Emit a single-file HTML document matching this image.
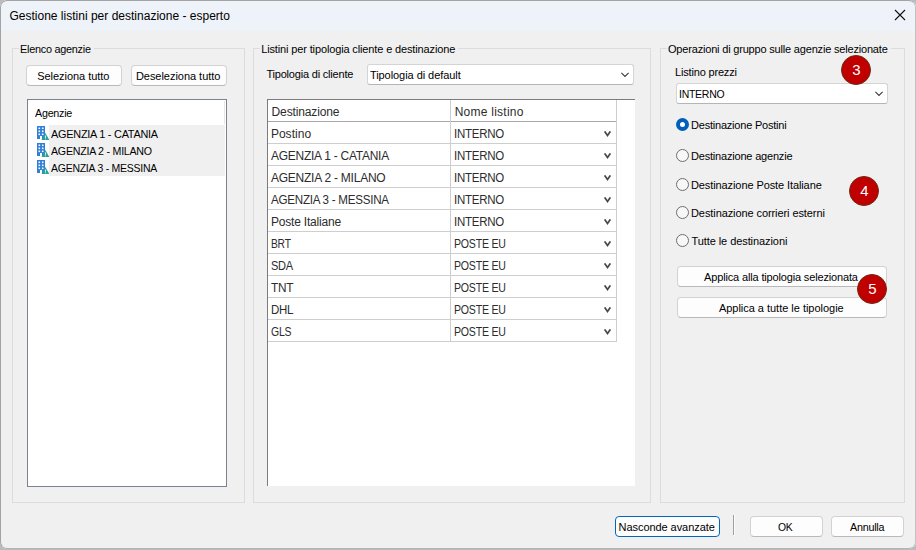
<!DOCTYPE html>
<html><head><meta charset="utf-8"><title>Gestione listini per destinazione - esperto</title>
<style>
*{box-sizing:border-box;margin:0;padding:0}
html,body{width:916px;height:550px;overflow:hidden;background:#b9bcbb;font-family:"Liberation Sans",sans-serif;font-size:11px;color:#000}
#win{position:absolute;left:0;top:0;width:916px;height:549px;background:#f0f0f0;border-radius:7px;overflow:hidden}
#winb{position:absolute;left:0;top:0;width:916px;height:549px;border-radius:7px;border:1px solid #a3a3a3;border-right-color:#c2c2c2;border-bottom-color:#b4b4b4;pointer-events:none}
#tb{position:absolute;left:0;top:0;width:916px;height:31px;background:#eef2f9}
.abs{position:absolute}
.x{position:absolute;white-space:nowrap}
.gb{position:absolute;border:1px solid #dcdcdc}
.gm{position:absolute;background:#f0f0f0;height:3px}
.btn{position:absolute;background:#fdfdfd;border:1px solid #d2d2d2;border-bottom-color:#b9b9b9;border-radius:4px}
.lb{position:absolute;background:#fff;border:1px solid #7a828d}
.row{position:absolute;left:49px;width:176px;height:17px;background:#f0f0f0}
.combo{position:absolute;background:#fff;border:1px solid #d4d4d4;border-bottom-color:#b5b5b5;border-radius:3px}
.radio{position:absolute;width:13px;height:13px;border-radius:50%;border:1px solid #6e6e6e;background:#f7f7f7}
.radio.on{border:4px solid #005fb8;background:#fff}
.badge{position:absolute;width:30px;height:30px;border-radius:50%;background:#c00000;border:1px solid #6e2a12;color:#fff;font-size:15px;line-height:28px;text-align:center;padding-left:1px}
.hl{position:absolute;height:1px;background:#cecece}
.vl{position:absolute;width:1px;background:#cecece}
</style></head><body>
<div id="win">
 <div id="tb"></div>
 <svg class="abs" style="left:894px;top:9px" width="12" height="12" viewBox="0 0 12 12"><path d="M1 1 L11 11 M11 1 L1 11" stroke="#111" stroke-width="1.1" fill="none"/></svg>

 <!-- group 1 -->
 <div class="gb" style="left:12px;top:48px;width:233px;height:455px"></div>
 <div class="gm" style="left:19px;top:47px;width:75px"></div>
 <div class="btn" style="left:26px;top:65px;width:96px;height:21px"></div>
 <div class="btn" style="left:131px;top:65px;width:96px;height:21px"></div>
 <div class="lb" style="left:27px;top:99px;width:200px;height:388px"></div>
 <div class="row" style="top:125px"></div>
 <div class="row" style="top:142px"></div>
 <div class="row" style="top:159px"></div>
 <div class="abs" style="left:224px;top:101px;width:1px;height:23px;background:#e6e6e6"></div>
 <svg class="abs" style="left:37px;top:126px" width="13" height="14" viewBox="0 0 13 14"><path d="M0 0h8v13h-3v-3h-2v3h-3z" fill="#2f7fd6"/><g fill="#fff"><rect x="1.5" y="1.5" width="1.6" height="1.6"/><rect x="4.9" y="1.5" width="1.6" height="1.6"/><rect x="1.5" y="4.5" width="1.6" height="1.6"/><rect x="4.9" y="4.5" width="1.6" height="1.6"/><rect x="1.5" y="7.5" width="1.6" height="1.6"/><rect x="4.9" y="7.5" width="1.6" height="1.6"/></g><path d="M8.4 7 L12.3 14 H4.6z" fill="#2aa198"/><rect x="8" y="9.5" width="0.9" height="2.3" fill="#e8fff8"/><rect x="8" y="12.4" width="0.9" height="0.9" fill="#e8fff8"/></svg>
<svg class="abs" style="left:37px;top:143px" width="13" height="14" viewBox="0 0 13 14"><path d="M0 0h8v13h-3v-3h-2v3h-3z" fill="#2f7fd6"/><g fill="#fff"><rect x="1.5" y="1.5" width="1.6" height="1.6"/><rect x="4.9" y="1.5" width="1.6" height="1.6"/><rect x="1.5" y="4.5" width="1.6" height="1.6"/><rect x="4.9" y="4.5" width="1.6" height="1.6"/><rect x="1.5" y="7.5" width="1.6" height="1.6"/><rect x="4.9" y="7.5" width="1.6" height="1.6"/></g><path d="M8.4 7 L12.3 14 H4.6z" fill="#2aa198"/><rect x="8" y="9.5" width="0.9" height="2.3" fill="#e8fff8"/><rect x="8" y="12.4" width="0.9" height="0.9" fill="#e8fff8"/></svg>
<svg class="abs" style="left:37px;top:160px" width="13" height="14" viewBox="0 0 13 14"><path d="M0 0h8v13h-3v-3h-2v3h-3z" fill="#2f7fd6"/><g fill="#fff"><rect x="1.5" y="1.5" width="1.6" height="1.6"/><rect x="4.9" y="1.5" width="1.6" height="1.6"/><rect x="1.5" y="4.5" width="1.6" height="1.6"/><rect x="4.9" y="4.5" width="1.6" height="1.6"/><rect x="1.5" y="7.5" width="1.6" height="1.6"/><rect x="4.9" y="7.5" width="1.6" height="1.6"/></g><path d="M8.4 7 L12.3 14 H4.6z" fill="#2aa198"/><rect x="8" y="9.5" width="0.9" height="2.3" fill="#e8fff8"/><rect x="8" y="12.4" width="0.9" height="0.9" fill="#e8fff8"/></svg>

 <!-- group 2 -->
 <div class="gb" style="left:253px;top:48px;width:398px;height:455px"></div>
 <div class="gm" style="left:260px;top:47px;width:198px"></div>
 <div class="combo" style="left:367px;top:64px;width:267px;height:21px"></div>
 <svg class="abs" style="left:621px;top:72px" width="9" height="6" viewBox="0 0 9 6"><path d="M0.4 0.9 L4 4.5 L7.6 0.9" stroke="#383838" stroke-width="1.1" fill="none"/></svg>
 <!-- grid -->
 <div class="abs" style="left:267px;top:99px;width:368px;height:387px;background:#fff;border-left:1px solid #7c7c7c;border-top:1px solid #7c7c7c"></div>
 <div class="hl" style="left:268px;top:121px;width:349px;background:#a8a8a8"></div>
<div class="hl" style="left:268px;top:143px;width:349px"></div>
<div class="hl" style="left:268px;top:165px;width:349px"></div>
<div class="hl" style="left:268px;top:187px;width:349px"></div>
<div class="hl" style="left:268px;top:209px;width:349px"></div>
<div class="hl" style="left:268px;top:231px;width:349px"></div>
<div class="hl" style="left:268px;top:253px;width:349px"></div>
<div class="hl" style="left:268px;top:275px;width:349px"></div>
<div class="hl" style="left:268px;top:297px;width:349px"></div>
<div class="hl" style="left:268px;top:319px;width:349px"></div>
<div class="hl" style="left:268px;top:341px;width:349px"></div>
<div class="vl" style="left:450px;top:100px;height:242px"></div>
<div class="vl" style="left:616px;top:100px;height:242px"></div>
<svg class="abs" style="left:604px;top:131px" width="7" height="6" viewBox="0 0 7 6"><path d="M0.6 0.4 L3.5 4.5 L6.4 0.4" stroke="#484848" stroke-width="1.75" fill="none"/></svg>
<svg class="abs" style="left:604px;top:153px" width="7" height="6" viewBox="0 0 7 6"><path d="M0.6 0.4 L3.5 4.5 L6.4 0.4" stroke="#484848" stroke-width="1.75" fill="none"/></svg>
<svg class="abs" style="left:604px;top:175px" width="7" height="6" viewBox="0 0 7 6"><path d="M0.6 0.4 L3.5 4.5 L6.4 0.4" stroke="#484848" stroke-width="1.75" fill="none"/></svg>
<svg class="abs" style="left:604px;top:197px" width="7" height="6" viewBox="0 0 7 6"><path d="M0.6 0.4 L3.5 4.5 L6.4 0.4" stroke="#484848" stroke-width="1.75" fill="none"/></svg>
<svg class="abs" style="left:604px;top:219px" width="7" height="6" viewBox="0 0 7 6"><path d="M0.6 0.4 L3.5 4.5 L6.4 0.4" stroke="#484848" stroke-width="1.75" fill="none"/></svg>
<svg class="abs" style="left:604px;top:241px" width="7" height="6" viewBox="0 0 7 6"><path d="M0.6 0.4 L3.5 4.5 L6.4 0.4" stroke="#484848" stroke-width="1.75" fill="none"/></svg>
<svg class="abs" style="left:604px;top:263px" width="7" height="6" viewBox="0 0 7 6"><path d="M0.6 0.4 L3.5 4.5 L6.4 0.4" stroke="#484848" stroke-width="1.75" fill="none"/></svg>
<svg class="abs" style="left:604px;top:285px" width="7" height="6" viewBox="0 0 7 6"><path d="M0.6 0.4 L3.5 4.5 L6.4 0.4" stroke="#484848" stroke-width="1.75" fill="none"/></svg>
<svg class="abs" style="left:604px;top:307px" width="7" height="6" viewBox="0 0 7 6"><path d="M0.6 0.4 L3.5 4.5 L6.4 0.4" stroke="#484848" stroke-width="1.75" fill="none"/></svg>
<svg class="abs" style="left:604px;top:329px" width="7" height="6" viewBox="0 0 7 6"><path d="M0.6 0.4 L3.5 4.5 L6.4 0.4" stroke="#484848" stroke-width="1.75" fill="none"/></svg>

 <!-- group 3 -->
 <div class="gb" style="left:660px;top:48px;width:245px;height:455px"></div>
 <div class="gm" style="left:667px;top:47px;width:224px"></div>
 <div class="combo" style="left:676px;top:83px;width:212px;height:21px"></div>
 <svg class="abs" style="left:875px;top:91px" width="9" height="6" viewBox="0 0 9 6"><path d="M0.4 0.9 L4 4.5 L7.6 0.9" stroke="#383838" stroke-width="1.1" fill="none"/></svg>
 <div class="radio on" style="left:676px;top:118px"></div>
 <div class="radio" style="left:676px;top:149px"></div>
 <div class="radio" style="left:676px;top:178px"></div>
 <div class="radio" style="left:676px;top:206px"></div>
 <div class="radio" style="left:676px;top:234px"></div>
 <div class="btn" style="left:677px;top:266px;width:210px;height:21px"></div>
 <div class="btn" style="left:677px;top:297px;width:210px;height:21px"></div>

 <!-- bottom buttons -->
 <div class="btn" style="left:615px;top:516px;width:105px;height:21px;border-color:#0067c0"></div>
 <div class="abs" style="left:733px;top:515px;width:1px;height:20px;background:#a0a0a0"></div><div class="abs" style="left:734px;top:515px;width:1px;height:21px;background:#fbfbfb"></div>
 <div class="btn" style="left:750px;top:516px;width:73px;height:21px"></div>
 <div class="btn" style="left:831px;top:516px;width:73px;height:21px"></div>

<span class="x t" id="title" style="left:9.40px;top:9.24px;letter-spacing:0.009px;font-size:12px;line-height:14px;color:#000">Gestione listini per destinazione - esperto</span>
<span class="x l" id="g1" style="left:19.80px;top:43.29px;letter-spacing:-0.250px;transform:scaleX(0.9855);transform-origin:0 0;font-size:11px;line-height:13px;color:#000">Elenco agenzie</span>
<span class="x l" id="b1" style="left:37.20px;top:69.89px;letter-spacing:-0.042px;font-size:11px;line-height:13px;color:#000">Seleziona tutto</span>
<span class="x l" id="b2" style="left:135.90px;top:69.89px;letter-spacing:-0.031px;font-size:11px;line-height:13px;color:#000">Deseleziona tutto</span>
<span class="x l" id="ag" style="left:34.90px;top:107.29px;letter-spacing:-0.250px;transform:scaleX(0.9746);transform-origin:0 0;font-size:11px;line-height:13px;color:#000">Agenzie</span>
<span class="x l" id="a1" style="left:51.30px;top:128.39px;letter-spacing:-0.250px;transform:scaleX(0.9903);transform-origin:0 0;font-size:11px;line-height:13px;color:#000">AGENZIA 1 - CATANIA</span>
<span class="x l" id="a2" style="left:51.30px;top:145.29px;letter-spacing:-0.250px;transform:scaleX(0.9667);transform-origin:0 0;font-size:11px;line-height:13px;color:#000">AGENZIA 2 - MILANO</span>
<span class="x l" id="a3" style="left:51.30px;top:162.29px;letter-spacing:-0.250px;transform:scaleX(0.9516);transform-origin:0 0;font-size:11px;line-height:13px;color:#000">AGENZIA 3 - MESSINA</span>
<span class="x l" id="g2" style="left:261.20px;top:43.49px;letter-spacing:-0.136px;font-size:11px;line-height:13px;color:#000">Listini per tipologia cliente e destinazione</span>
<span class="x l" id="tc" style="left:266.40px;top:68.09px;letter-spacing:-0.195px;font-size:11px;line-height:13px;color:#000">Tipologia di cliente</span>
<span class="x l" id="td" style="left:369.90px;top:68.89px;letter-spacing:-0.055px;font-size:11px;line-height:13px;color:#000">Tipologia di default</span>
<span class="x l" id="g3" style="left:668.00px;top:43.49px;letter-spacing:-0.185px;font-size:11px;line-height:13px;color:#000">Operazioni di gruppo sulle agenzie selezionate</span>
<span class="x l" id="lp" style="left:675.10px;top:66.29px;letter-spacing:-0.185px;font-size:11px;line-height:13px;color:#000">Listino prezzi</span>
<span class="x l" id="ci" style="left:679.00px;top:87.59px;letter-spacing:-0.250px;transform:scaleX(0.9500);transform-origin:0 0;font-size:11px;line-height:13px;color:#000">INTERNO</span>
<span class="x l" id="r1" style="left:691.00px;top:118.79px;letter-spacing:-0.209px;font-size:11px;line-height:13px;color:#000">Destinazione Postini</span>
<span class="x l" id="r2" style="left:691.00px;top:149.59px;letter-spacing:-0.194px;font-size:11px;line-height:13px;color:#000">Destinazione agenzie</span>
<span class="x l" id="r3" style="left:691.00px;top:178.59px;letter-spacing:-0.097px;font-size:11px;line-height:13px;color:#000">Destinazione Poste Italiane</span>
<span class="x l" id="r4" style="left:691.00px;top:207.29px;letter-spacing:-0.087px;font-size:11px;line-height:13px;color:#000">Destinazione corrieri esterni</span>
<span class="x l" id="r5" style="left:691.50px;top:235.09px;letter-spacing:-0.077px;font-size:11px;line-height:13px;color:#000">Tutte le destinazioni</span>
<span class="x l" id="p1" style="left:704.10px;top:270.89px;letter-spacing:-0.155px;font-size:11px;line-height:13px;color:#000">Applica alla tipologia selezionata</span>
<span class="x l" id="p2" style="left:718.90px;top:302.19px;letter-spacing:-0.021px;font-size:11px;line-height:13px;color:#000">Applica a tutte le tipologie</span>
<span class="x l" id="bn" style="left:618.60px;top:521.09px;letter-spacing:-0.065px;font-size:11px;line-height:13px;color:#000">Nasconde avanzate</span>
<span class="x l" id="bo" style="left:777.90px;top:521.09px;letter-spacing:-0.250px;transform:scaleX(0.9453);transform-origin:0 0;font-size:11px;line-height:13px;color:#000">OK</span>
<span class="x l" id="ba" style="left:849.90px;top:521.09px;letter-spacing:-0.250px;transform:scaleX(0.9799);transform-origin:0 0;font-size:11px;line-height:13px;color:#000">Annulla</span>
<span class="x g" id="h1" style="left:271.60px;top:104.84px;letter-spacing:-0.143px;font-size:12px;line-height:14px;color:#2c2c2c">Destinazione</span>
<span class="x g" id="h2" style="left:454.70px;top:104.84px;letter-spacing:0.243px;font-size:12px;line-height:14px;color:#2c2c2c">Nome listino</span>
<span class="x g" id="d0" style="left:270.90px;top:126.84px;letter-spacing:0.028px;font-size:12px;line-height:14px;color:#2c2c2c">Postino</span>
<span class="x g" id="n0" style="left:454.00px;top:126.84px;letter-spacing:-0.250px;transform:scaleX(0.9562);transform-origin:0 0;font-size:12px;line-height:14px;color:#2c2c2c">INTERNO</span>
<span class="x g" id="d1" style="left:270.90px;top:148.84px;letter-spacing:-0.250px;transform:scaleX(0.9981);transform-origin:0 0;font-size:12px;line-height:14px;color:#2c2c2c">AGENZIA 1 - CATANIA</span>
<span class="x g" id="n1" style="left:454.00px;top:148.84px;letter-spacing:-0.250px;transform:scaleX(0.9562);transform-origin:0 0;font-size:12px;line-height:14px;color:#2c2c2c">INTERNO</span>
<span class="x g" id="d2" style="left:270.90px;top:170.84px;letter-spacing:-0.230px;font-size:12px;line-height:14px;color:#2c2c2c">AGENZIA 2 - MILANO</span>
<span class="x g" id="n2" style="left:454.00px;top:170.84px;letter-spacing:-0.250px;transform:scaleX(0.9562);transform-origin:0 0;font-size:12px;line-height:14px;color:#2c2c2c">INTERNO</span>
<span class="x g" id="d3" style="left:270.90px;top:192.84px;letter-spacing:-0.250px;transform:scaleX(0.9664);transform-origin:0 0;font-size:12px;line-height:14px;color:#2c2c2c">AGENZIA 3 - MESSINA</span>
<span class="x g" id="n3" style="left:454.00px;top:192.84px;letter-spacing:-0.250px;transform:scaleX(0.9562);transform-origin:0 0;font-size:12px;line-height:14px;color:#2c2c2c">INTERNO</span>
<span class="x g" id="d4" style="left:270.90px;top:214.84px;letter-spacing:-0.186px;font-size:12px;line-height:14px;color:#2c2c2c">Poste Italiane</span>
<span class="x g" id="n4" style="left:454.00px;top:214.84px;letter-spacing:-0.250px;transform:scaleX(0.9562);transform-origin:0 0;font-size:12px;line-height:14px;color:#2c2c2c">INTERNO</span>
<span class="x g" id="d5" style="left:270.90px;top:236.84px;letter-spacing:-0.250px;transform:scaleX(0.8542);transform-origin:0 0;font-size:12px;line-height:14px;color:#2c2c2c">BRT</span>
<span class="x g" id="n5" style="left:454.00px;top:236.84px;letter-spacing:-0.250px;transform:scaleX(0.8823);transform-origin:0 0;font-size:12px;line-height:14px;color:#2c2c2c">POSTE EU</span>
<span class="x g" id="d6" style="left:270.90px;top:258.84px;letter-spacing:-0.250px;transform:scaleX(0.9178);transform-origin:0 0;font-size:12px;line-height:14px;color:#2c2c2c">SDA</span>
<span class="x g" id="n6" style="left:454.00px;top:258.84px;letter-spacing:-0.250px;transform:scaleX(0.8823);transform-origin:0 0;font-size:12px;line-height:14px;color:#2c2c2c">POSTE EU</span>
<span class="x g" id="d7" style="left:270.90px;top:280.84px;letter-spacing:-0.250px;transform:scaleX(0.9856);transform-origin:0 0;font-size:12px;line-height:14px;color:#2c2c2c">TNT</span>
<span class="x g" id="n7" style="left:454.00px;top:280.84px;letter-spacing:-0.250px;transform:scaleX(0.8823);transform-origin:0 0;font-size:12px;line-height:14px;color:#2c2c2c">POSTE EU</span>
<span class="x g" id="d8" style="left:270.90px;top:302.84px;letter-spacing:-0.250px;transform:scaleX(0.9568);transform-origin:0 0;font-size:12px;line-height:14px;color:#2c2c2c">DHL</span>
<span class="x g" id="n8" style="left:454.00px;top:302.84px;letter-spacing:-0.250px;transform:scaleX(0.8823);transform-origin:0 0;font-size:12px;line-height:14px;color:#2c2c2c">POSTE EU</span>
<span class="x g" id="d9" style="left:270.90px;top:324.84px;letter-spacing:-0.250px;transform:scaleX(0.8718);transform-origin:0 0;font-size:12px;line-height:14px;color:#2c2c2c">GLS</span>
<span class="x g" id="n9" style="left:454.00px;top:324.84px;letter-spacing:-0.250px;transform:scaleX(0.8823);transform-origin:0 0;font-size:12px;line-height:14px;color:#2c2c2c">POSTE EU</span>
 <div class="badge" style="left:841px;top:55px">3</div>
 <div class="badge" style="left:849px;top:176px">4</div>
 <div class="badge" style="left:857px;top:274px">5</div>
</div>
<div id="winb"></div>
</body></html>
